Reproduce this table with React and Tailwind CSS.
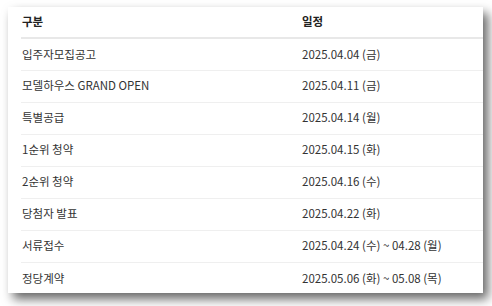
import React from 'react';

const schedule = [
  { label: '입주자모집공고', date: '2025.04.04 (금)' },
  { label: '모델하우스 GRAND OPEN', date: '2025.04.11 (금)' },
  { label: '특별공급', date: '2025.04.14 (월)' },
  { label: '1순위 청약', date: '2025.04.15 (화)' },
  { label: '2순위 청약', date: '2025.04.16 (수)' },
  { label: '당첨자 발표', date: '2025.04.22 (화)' },
  { label: '서류접수', date: '2025.04.24 (수) ~ 04.28 (월)' },
  { label: '정당계약', date: '2025.05.06 (화) ~ 05.08 (목)' },
];

const App = () => {
  return (
    <div
      className="w-[492px] h-[306px] bg-white pt-[7px] pl-[8px] overflow-hidden"
      style={{ fontFamily: '"Noto Sans CJK KR", "Noto Sans", sans-serif' }}
    >
      <div className="w-[475px] h-[286px] bg-white pl-[13px] overflow-hidden shadow-[5px_6px_10px_rgba(0,0,0,0.6)]">
        <table className="w-[470px] border-collapse text-[11.5px] text-[#333]">
          <thead>
            <tr className="h-[31px] border-b-2 border-[#e8e8e8]">
              <th className="w-[281px] text-left font-bold text-[#222] pl-px">구분</th>
              <th className="text-left font-bold text-[#222]">일정</th>
            </tr>
          </thead>
          <tbody>
            {schedule.map((row, i) => (
              <tr
                key={row.label}
                className={`h-[32px] ${i < schedule.length - 1 ? 'border-b border-[#efefef]' : ''}`}
              >
                <td className="pl-px">{row.label}</td>
                <td>{row.date}</td>
              </tr>
            ))}
          </tbody>
        </table>
      </div>
    </div>
  );
};

export default App;
